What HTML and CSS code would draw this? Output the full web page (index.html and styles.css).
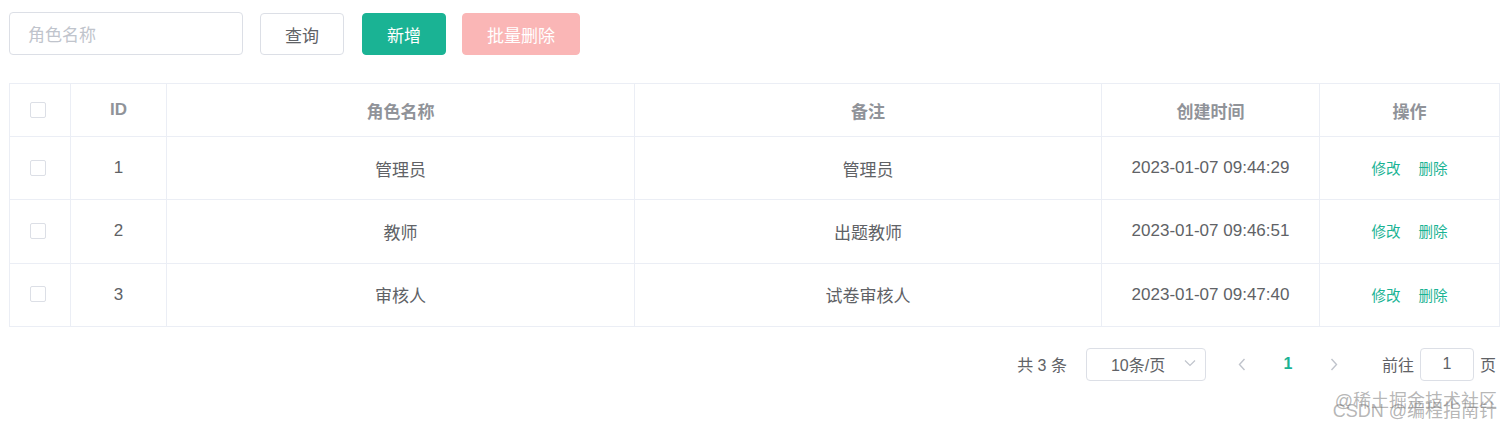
FILE: index.html
```html
<!DOCTYPE html>
<html lang="zh">
<head>
<meta charset="utf-8">
<link rel="stylesheet" href="styles.css">
</head>
<body>
<div class="page">
  <div class="toolbar">
    <div class="search"><span class="placeholder">角色名称</span></div>
    <button class="btn btn-default">查询</button>
    <button class="btn btn-primary">新增</button>
    <button class="btn btn-danger-disabled">批量删除</button>
  </div>

  <table class="grid">
    <colgroup>
      <col class="c-check"><col class="c-id"><col class="c-name"><col class="c-remark"><col class="c-time"><col class="c-op">
    </colgroup>
    <thead>
      <tr>
        <th class="cell-check"><span class="checkbox"></span></th>
        <th>ID</th>
        <th>角色名称</th>
        <th>备注</th>
        <th>创建时间</th>
        <th>操作</th>
      </tr>
    </thead>
    <tbody>
      <tr>
        <td class="cell-check"><span class="checkbox"></span></td>
        <td>1</td>
        <td>管理员</td>
        <td>管理员</td>
        <td>2023-01-07 09:44:29</td>
        <td><span class="link">修改</span><span class="link">删除</span></td>
      </tr>
      <tr>
        <td class="cell-check"><span class="checkbox"></span></td>
        <td>2</td>
        <td>教师</td>
        <td>出题教师</td>
        <td>2023-01-07 09:46:51</td>
        <td><span class="link">修改</span><span class="link">删除</span></td>
      </tr>
      <tr>
        <td class="cell-check"><span class="checkbox"></span></td>
        <td>3</td>
        <td>审核人</td>
        <td>试卷审核人</td>
        <td>2023-01-07 09:47:40</td>
        <td><span class="link">修改</span><span class="link">删除</span></td>
      </tr>
    </tbody>
  </table>

  <div class="pager">
    <span class="total">共 3 条</span>
    <div class="size-select">
      <span>10条/页</span>
      <svg class="caret" width="12" height="8" viewBox="0 0 12 8"><path d="M1 1.5 L6 6.5 L11 1.5" fill="none" stroke="#c0c4cc" stroke-width="1.2"/></svg>
    </div>
    <span class="nav prev"><svg width="8" height="13" viewBox="0 0 8 13"><path d="M6.5 1 L1.5 6.5 L6.5 12" fill="none" stroke="#c0c4cc" stroke-width="1.4"/></svg></span>
    <span class="num active">1</span>
    <span class="nav next"><svg width="8" height="13" viewBox="0 0 8 13"><path d="M1.5 1 L6.5 6.5 L1.5 12" fill="none" stroke="#c0c4cc" stroke-width="1.4"/></svg></span>
    <span class="goto">前往</span>
    <div class="jump">1</div>
    <span class="goto-end">页</span>
  </div>

  <div class="watermark">
    <span class="wm1">@稀土掘金技术社区</span>
    <span class="wm2">CSDN @编程指南针</span>
  </div>
</div>
</body>
</html>
```

FILE: styles.css
```css
* { box-sizing: border-box; }
html, body { margin: 0; background: #fff; }
body {
  font-family: "Liberation Sans", "Noto Sans CJK SC", sans-serif;
  color: #606266;
  width: 1512px;
  height: 424px;
  overflow: hidden;
}
.page { position: relative; width: 1512px; height: 424px; padding: 12px 0 0 9px; }

.toolbar { display: flex; align-items: flex-start; height: 44px; }
.search {
  width: 234px; height: 43px;
  border: 1px solid #dcdfe6; border-radius: 4px;
  display: flex; align-items: center; padding-left: 18px;
  font-size: 17px;
}
.placeholder { color: #c0c4cc; }
.btn {
  height: 42px; margin-top: 1px;
  border-radius: 4px; font-size: 17px;
  font-family: inherit; padding: 0; cursor: pointer;
}
.btn-default { width: 84px; margin-left: 17px; background: #fff; border: 1px solid #dcdfe6; color: #606266; }
.btn-primary { width: 84px; margin-left: 18px; background: #1ab394; border: 1px solid #1ab394; color: #fff; }
.btn-danger-disabled { width: 118px; margin-left: 16px; background: #fab6b6; border: 1px solid #fab6b6; color: #fff; }

.grid {
  margin-top: 27px;
  width: 1490px;
  border-collapse: collapse;
  table-layout: fixed;
  border: 1px solid #ebeef5;
  font-size: 17px;
}
.c-check { width: 61px; }
.c-id { width: 96px; }
.c-name { width: 468px; }
.c-remark { width: 467px; }
.c-time { width: 218px; }
.c-op { width: 180px; }
.grid th, .grid td {
  border: 1px solid #ebeef5;
  text-align: center;
  padding: 0;
}
.grid th { height: 53px; color: #909399; font-weight: bold; }
.grid td { height: 63.3px; color: #606266; }
.grid .cell-check { padding-right: 5px; }
.checkbox {
  display: inline-block; width: 16px; height: 16px;
  border: 1px solid #dcdfe6; border-radius: 2px;
  vertical-align: middle; background: #fff;
  position: relative; top: -1px;
}
.link { color: #1ab394; font-size: 14.5px; margin: 0 9px; }

.pager {
  display: flex; align-items: center;
  justify-content: flex-end;
  margin-top: 21px; padding-right: 16px;
  height: 33px; font-size: 16px; color: #606266;
}
.total { margin-right: 19px; }
.size-select {
  width: 120px; height: 33px;
  border: 1px solid #dcdfe6; border-radius: 4px;
  display: flex; align-items: center; justify-content: space-between;
  padding: 0 9px 0 24px;
  font-size: 16px;
}
.caret { margin-top: -2px; }
.nav { width: 32px; display: flex; justify-content: center; align-items: center; }
.prev { margin-left: 20px; }
.num { width: 30px; text-align: center; margin: 0 15px; font-weight: bold; }
.num.active { color: #1ab394; }
.goto { margin-left: 32px; }
.jump {
  width: 54px; height: 33px; margin: 0 6px;
  border: 1px solid #dcdfe6; border-radius: 4px;
  display: flex; align-items: center; justify-content: center;
}

.watermark {
  position: absolute; right: 15px; top: 386px;
  width: 180px; height: 34px;
  font-size: 18px; color: rgba(120,120,120,0.55);
}
.wm1 { position: absolute; right: 0; top: 0; white-space: nowrap; }
.wm2 { position: absolute; right: 0; top: 10px; white-space: nowrap; }
```
